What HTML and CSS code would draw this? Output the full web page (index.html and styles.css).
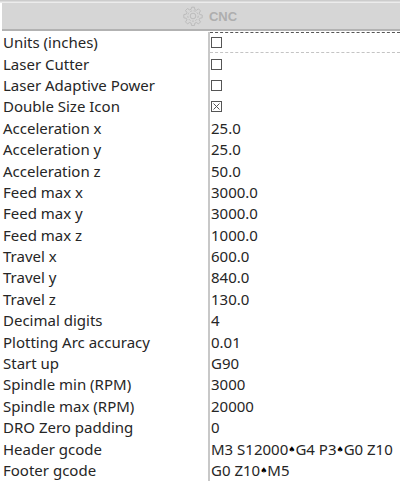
FILE: index.html
```html
<!DOCTYPE html>
<html lang="en">
<head>
<meta charset="utf-8">
<title>CNC</title>
<link rel="stylesheet" href="styles.css">
</head>
<body>
<div class="topline"></div>
<header class="title">
  <svg class="gear" width="20" height="20" viewBox="0 0 20 20" fill="none" stroke="#bcbcbc" stroke-width="1">
    <circle cx="10" cy="10" r="2.8"/>
    <circle cx="10" cy="10" r="5.2" stroke-dasharray="2 1.5"/>
    <path d="M8.6 1.2h2.8l.5 2.5 1.5.6 2.1-1.4 2 2-1.4 2.1.6 1.5 2.5.5v2.8l-2.5.5-.6 1.5 1.4 2.1-2 2-2.1-1.4-1.5.6-.5 2.5H8.6l-.5-2.5-1.5-.6-2.1 1.4-2-2 1.4-2.1-.6-1.5-2.5-.5V8.6l2.5-.5.6-1.5-1.4-2.1 2-2 2.1 1.4 1.5-.6z"/>
  </svg>
  <span class="title-text">CNC</span>
</header>
<main class="table">
  <div class="cell label">Units (inches)</div><div class="cell value focus"><span class="check"></span></div>
  <div class="cell label">Laser Cutter</div><div class="cell value"><span class="check"></span></div>
  <div class="cell label">Laser Adaptive Power</div><div class="cell value"><span class="check"></span></div>
  <div class="cell label">Double Size Icon</div><div class="cell value"><span class="check"><svg width="9" height="9" viewBox="0 0 9 9" stroke="#555" stroke-width="1"><path d="M1.5 1.5l6 6M7.5 1.5l-6 6"/></svg></span></div>
  <div class="cell label">Acceleration x</div><div class="cell value">25.0</div>
  <div class="cell label">Acceleration y</div><div class="cell value">25.0</div>
  <div class="cell label">Acceleration z</div><div class="cell value">50.0</div>
  <div class="cell label">Feed max x</div><div class="cell value">3000.0</div>
  <div class="cell label">Feed max y</div><div class="cell value">3000.0</div>
  <div class="cell label">Feed max z</div><div class="cell value">1000.0</div>
  <div class="cell label">Travel x</div><div class="cell value">600.0</div>
  <div class="cell label">Travel y</div><div class="cell value">840.0</div>
  <div class="cell label">Travel z</div><div class="cell value">130.0</div>
  <div class="cell label">Decimal digits</div><div class="cell value">4</div>
  <div class="cell label">Plotting Arc accuracy</div><div class="cell value">0.01</div>
  <div class="cell label">Start up</div><div class="cell value">G90</div>
  <div class="cell label">Spindle min (RPM)</div><div class="cell value">3000</div>
  <div class="cell label">Spindle max (RPM)</div><div class="cell value">20000</div>
  <div class="cell label">DRO Zero padding</div><div class="cell value">0</div>
  <div class="cell label">Header gcode</div><div class="cell value">M3 S12000<span class="sep">♠</span>G4 P3<span class="sep">♠</span>G0 Z10</div>
  <div class="cell label">Footer gcode</div><div class="cell value">G0 Z10<span class="sep">♠</span>M5</div>
</main>
</body>
</html>
```
FILE: styles.css
```css
html, body {
  margin: 0;
  padding: 0;
  height: 483px;
  overflow: hidden;
  background: #fff;
}
body {
  font-family: "Noto Sans", sans-serif;
  font-size: 15px;
  color: #262626;
}
.topline {
  height: 3px;
  background: linear-gradient(#c4c4c4, #f4f4f4);
}
.title {
  height: 26px;
  margin-left: 2px;
  display: flex;
  align-items: center;
  justify-content: center;
  gap: 6px;
  padding-left: 18px;
  background: #d6d6d6;
  border-bottom: 2px solid #b2b2b2;
}
.gear { display: block; }
.title-text {
  font-family: "Liberation Sans", sans-serif;
  font-weight: bold;
  font-size: 13px;
  color: #aeaeae;
}
.table {
  display: grid;
  grid-template-columns: 208px 1fr;
  grid-auto-rows: 21.4px;
  margin-left: 2px;
  margin-top: 1px;
}
.cell {
  display: flex;
  align-items: center;
  white-space: nowrap;
  line-height: 21px;
}
.label {
  padding-left: 1px;
  border-right: 2px solid #c8c8c8;
  box-sizing: border-box;
}
.value { padding-left: 1px; }
.focus {
  border-top: 1px dashed #555;
  border-bottom: 1px dashed #c4c4c4;
  box-sizing: border-box;
}
.check {
  width: 9px;
  height: 9px;
  border: 1px solid #555;
  background: #fff;
  display: block;
}
.check svg { display: block; }
.sep {
  font-family: "DejaVu Sans", sans-serif;
  font-size: 8px;
  color: #000;
}
```
